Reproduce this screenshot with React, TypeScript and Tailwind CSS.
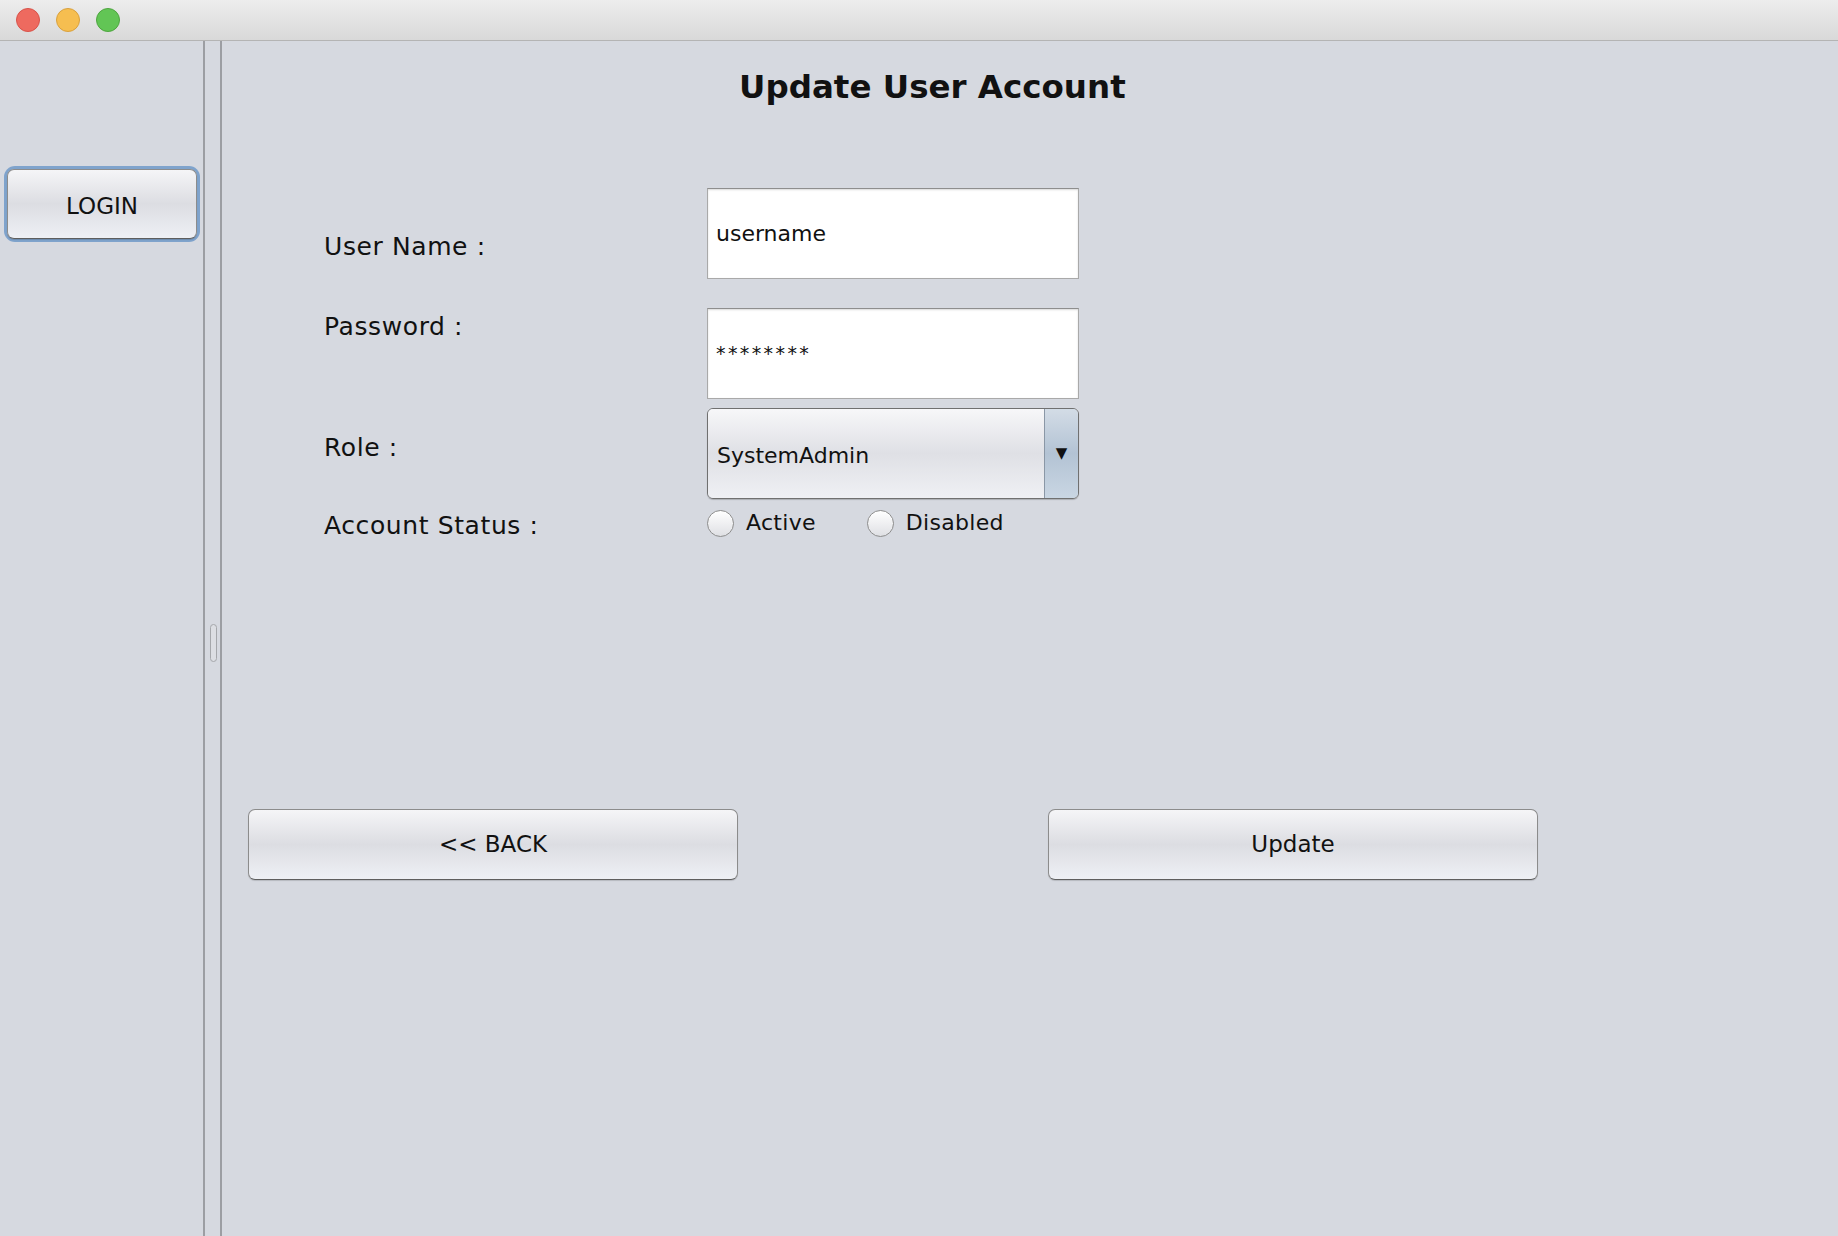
import React from "react";

const font = { fontFamily: '"DejaVu Sans", "Liberation Sans", sans-serif' };

function AquaButton({ children, className = "" }: { children: React.ReactNode; className?: string }) {
  return (
    <div
      className={
        "flex items-center justify-center rounded-[7px] border border-[#8c8c8c] border-b-[#5e5e5e] bg-gradient-to-b from-[#f5f5f7] via-[#dcdde2] to-[#eef0f5] text-[23px] text-[#111] shadow-[0_1px_1px_rgba(0,0,0,0.15)] " +
        className
      }
    >
      {children}
    </div>
  );
}

function Radio({ label }: { label: string }) {
  return (
    <div className="flex items-center gap-[12px]">
      <div className="h-[27px] w-[27px] rounded-full border border-[#8d8d8d] bg-gradient-to-b from-[#ffffff] to-[#dfe0e4] shadow-[inset_0_1px_1px_rgba(255,255,255,0.8)]" />
      <span className="text-[22px] leading-[30px] tracking-[0.3px] text-[#111]">{label}</span>
    </div>
  );
}

export default function App() {
  return (
    <div className="flex h-[1236px] w-[1838px] flex-col overflow-hidden bg-[#d6d9e0]" style={font}>
      {/* title bar */}
      <div className="flex h-[41px] shrink-0 items-center gap-[16px] border-b border-[#b4b4b4] bg-gradient-to-b from-[#ededed] to-[#d9d9d9] pl-[16px]">
        <div className="h-[24px] w-[24px] rounded-full border border-[#d8534a] bg-[#ee6a5f]" />
        <div className="h-[24px] w-[24px] rounded-full border border-[#d9a13e] bg-[#f6be50]" />
        <div className="h-[24px] w-[24px] rounded-full border border-[#4ea53f] bg-[#62c555]" />
      </div>

      <div className="flex flex-1">
        {/* left panel */}
        <div className="w-[203px] shrink-0 pt-[128px] pl-[7px]">
          <div className="w-[190px] rounded-[8px] shadow-[0_0_0_3px_#7fa3cc]">
            <AquaButton className="h-[70px] w-[190px] pt-[4px]">LOGIN</AquaButton>
          </div>
        </div>
        {/* splitter */}
        <div className="w-[2px] shrink-0 bg-[#9c9ea3]" />
        <div className="flex w-[15px] shrink-0 flex-col items-center pt-[583px]">
          <div className="ml-[2px] h-[38px] w-[7px] rounded-[4px] border border-[#a5a7ab] bg-[#dcdee3]" />
        </div>
        <div className="w-[2px] shrink-0 bg-[#9c9ea3]" />

        {/* content */}
        <div className="flex-1">
          <div className="ml-[517px] mt-[26px] h-[40px] text-[32.5px] font-bold leading-[40px] text-[#111]">
            Update User Account
          </div>

          <div className="mt-[81px] flex">
            {/* labels */}
            <div className="ml-[102px] flex w-[383px] flex-col pt-[44px] text-[25px] leading-[30px] tracking-[0.6px] text-[#111]">
              <div>User Name :</div>
              <div className="mt-[50px]">Password :</div>
              <div className="mt-[91px]">Role :</div>
              <div className="mt-[48px]">Account Status :</div>
            </div>
            {/* fields */}
            <div className="flex w-[372px] flex-col">
              <div className="flex h-[91px] items-center border border-[#a9a9a9] border-t-[#8e8e8e] bg-white pl-[8px] text-[22px] text-[#111] shadow-[inset_0_1px_2px_rgba(0,0,0,0.15)]">
                username
              </div>
              <div className="mt-[29px] flex h-[91px] items-center border border-[#a9a9a9] border-t-[#8e8e8e] bg-white pl-[8px] text-[19px] tracking-[2.4px] text-[#111] shadow-[inset_0_1px_2px_rgba(0,0,0,0.15)]">
                ********
              </div>
              <div className="mt-[9px] flex h-[91px] overflow-hidden rounded-[6px] border border-[#707070] shadow-[0_1px_1px_rgba(0,0,0,0.2)]">
                <div className="flex flex-1 items-center bg-gradient-to-b from-[#f7f7f9] via-[#dfe0e5] to-[#eff0f4] pl-[9px] pt-[3px] text-[22px] text-[#111]">
                  SystemAdmin
                </div>
                <div className="flex w-[34px] items-center justify-center border-l border-[#8a97a6] bg-gradient-to-b from-[#d3dce6] via-[#b3c3d4] to-[#c9d6e3] text-[15px] text-[#111]">
                  ▼
                </div>
              </div>
              <div className="mt-[9px] flex items-center gap-[51px]">
                <Radio label="Active" />
                <Radio label="Disabled" />
              </div>
            </div>
          </div>

          <div className="ml-[26px] mt-[268px] flex gap-[310px]">
            <AquaButton className="h-[71px] w-[490px]">{"<< BACK"}</AquaButton>
            <AquaButton className="h-[71px] w-[490px]">Update</AquaButton>
          </div>
        </div>
      </div>
    </div>
  );
}
